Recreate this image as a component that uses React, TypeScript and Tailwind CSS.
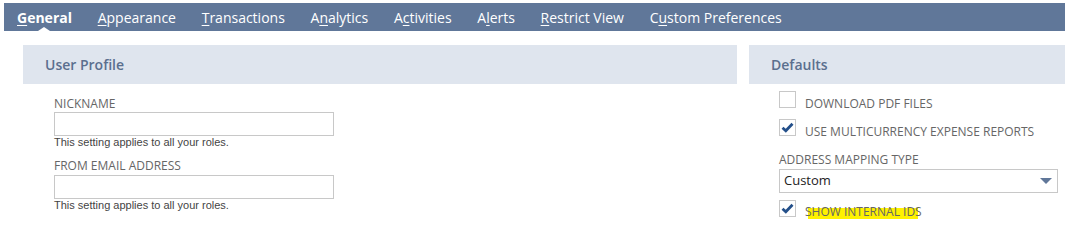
import React from 'react';

const tabs: { pre: string; key: string; post: string; active?: boolean }[] = [
  { pre: '', key: 'G', post: 'eneral', active: true },
  { pre: '', key: 'A', post: 'ppearance' },
  { pre: '', key: 'T', post: 'ransactions' },
  { pre: 'A', key: 'n', post: 'alytics' },
  { pre: 'A', key: 'c', post: 'tivities' },
  { pre: 'A', key: 'l', post: 'erts' },
  { pre: '', key: 'R', post: 'estrict View' },
  { pre: 'C', key: 'u', post: 'stom Preferences' },
];

const Check = ({ checked }: { checked?: boolean }) => (
  <div className="w-[17px] h-[17px] border border-[#c8c8c8] bg-white flex items-center justify-center shrink-0">
    {checked && (
      <svg width="13" height="11" viewBox="0 0 13 11">
        <path d="M1.5 5.8 L4.8 8.8 L11.5 1.8" fill="none" stroke="#24508a" strokeWidth="2.8" />
      </svg>
    )}
  </div>
);

const Field = ({ label, first }: { label: string; first?: boolean }) => (
  <div className={first ? 'mt-[12px]' : 'mt-[9px]'}>
    <div className="text-[12px] leading-[16px] text-[#666]">{label}</div>
    <div className={`${first ? '' : 'mt-[1px]'} w-[280px] h-[24px] border border-[#c8c8c8] bg-white`} />
    <div className="font-['Liberation_Sans',Arial,sans-serif] text-[11px] leading-[13px] text-[#444]">
      This setting applies to all your roles.
    </div>
  </div>
);

export default function App() {
  return (
    <div className="w-[1065px] h-[224px] bg-white pt-[3px] pl-[4px] overflow-hidden font-['Open_Sans',sans-serif]">
      {/* Tab bar */}
      <div className="h-[28px] bg-[#607799] flex items-center pl-[13px] gap-[25.7px] text-white text-[14px]">
        {tabs.map((t) => (
          <div key={t.post} className={`relative h-full flex items-center ${t.active ? 'font-bold' : ''}`}>
            <span>
              {t.pre}
              <span className="underline underline-offset-2">{t.key}</span>
              {t.post}
            </span>
            {t.active && (
              <div className="absolute bottom-0 left-1/2 -translate-x-1/2 w-0 h-0 border-l-[6px] border-r-[6px] border-b-[4px] border-l-transparent border-r-transparent border-b-white" />
            )}
          </div>
        ))}
      </div>

      <div className="mt-[14px] ml-[19px] flex gap-[12px]">
        {/* User Profile */}
        <div className="w-[714px]">
          <div className="h-[39px] bg-[#dfe5ee] flex items-center pl-[22px] text-[14px] font-semibold text-[#5b6f8e]">
            User Profile
          </div>
          <div className="pl-[31px]">
            <Field label="NICKNAME" first />
            <Field label="FROM EMAIL ADDRESS" />
          </div>
        </div>

        {/* Defaults */}
        <div className="flex-1">
          <div className="h-[39px] bg-[#dfe5ee] flex items-center pl-[22px] text-[14px] font-semibold text-[#5b6f8e]">
            Defaults
          </div>
          <div className="pl-[30px] pr-[7px] text-[12px] text-[#666]">
            <div className="mt-[7px] flex items-end gap-[9px] h-[17px]">
              <Check />
              <span className="leading-[16px] translate-y-[4px]">DOWNLOAD PDF FILES</span>
            </div>
            <div className="mt-[11px] flex items-end gap-[9px] h-[17px]">
              <Check checked />
              <span className="leading-[16px] translate-y-[4px]">USE MULTICURRENCY EXPENSE REPORTS</span>
            </div>
            <div className="mt-[16px] leading-[16px]">ADDRESS MAPPING TYPE</div>
            <div className="mt-[1px] h-[24px] border border-[#c8c8c8] flex items-center justify-between pl-[4px] pr-[5px]">
              <span className="text-[13px] text-[#222]">Custom</span>
              <svg width="12" height="6" viewBox="0 0 12 6">
                <path d="M0 0 H12 L6 6 Z" fill="#607799" />
              </svg>
            </div>
            <div className="mt-[7px] flex items-end gap-[9px] h-[17px]">
              <Check checked />
              <span className="relative leading-[16px] translate-y-[3px]">
                <span className="absolute left-[3px] right-[4px] top-[4px] bottom-[1px] bg-[#fff200]" />
                <span className="relative">SHOW INTERNAL IDS</span>
              </span>
            </div>
          </div>
        </div>
      </div>
    </div>
  );
}
